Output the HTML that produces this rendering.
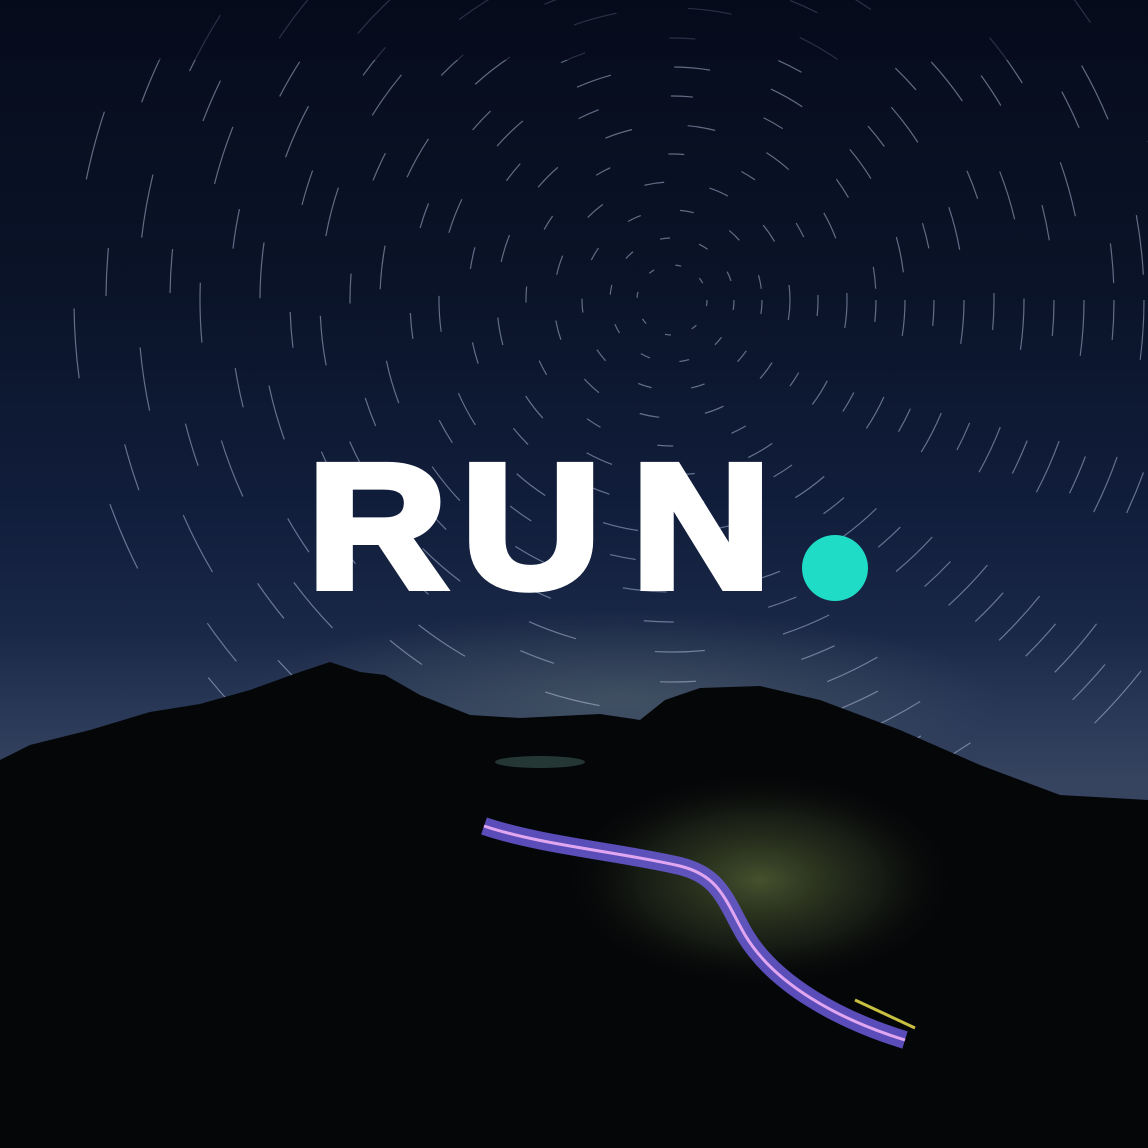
<!DOCTYPE html>
<html><head><meta charset="utf-8"><style>
html,body{margin:0;padding:0;background:#070d1e;width:1148px;height:1148px;overflow:hidden;position:relative}
svg{position:absolute;left:0;top:0}
.l{position:absolute;top:439px;font-family:"Liberation Sans",sans-serif;font-weight:700;font-size:176px;color:#fff;line-height:1;-webkit-text-stroke:8px #fff;paint-order:stroke fill;transform:scaleX(1.09);transform-origin:left top;
text-shadow:2px 0 0 #fff,-2px 0 0 #fff,3px 0 0 #fff,-3px 0 0 #fff}
.dot{position:absolute;left:802px;top:535px;width:66px;height:66px;border-radius:50%;background:#1fdcc6}
</style></head><body>
<svg width="1148" height="1148" viewBox="0 0 1148 1148" xmlns="http://www.w3.org/2000/svg">
<defs>
<linearGradient id="sky" x1="0" y1="0" x2="0" y2="1">
<stop offset="0" stop-color="#060c1c"/>
<stop offset="0.25" stop-color="#0a1328"/>
<stop offset="0.45" stop-color="#111e3c"/>
<stop offset="0.55" stop-color="#1a2847"/>
<stop offset="0.62" stop-color="#293857"/>
<stop offset="0.68" stop-color="#36445f"/>
<stop offset="1" stop-color="#36445f"/>
</linearGradient>
<radialGradient id="glow" cx="0.5" cy="0.5" r="0.5">
<stop offset="0" stop-color="#5a6a70" stop-opacity="0.5"/>
<stop offset="1" stop-color="#5a6a70" stop-opacity="0"/>
</radialGradient>
<radialGradient id="hill" cx="0.5" cy="0.5" r="0.5">
<stop offset="0" stop-color="#5b6a3a" stop-opacity="0.75"/>
<stop offset="0.6" stop-color="#2a3320" stop-opacity="0.5"/>
<stop offset="1" stop-color="#050607" stop-opacity="0"/>
</radialGradient>
</defs>
<rect width="1148" height="1148" fill="url(#sky)"/>
<ellipse cx="620" cy="700" rx="380" ry="90" fill="url(#glow)"/>
<g fill="none" stroke="#bcc6e4" stroke-opacity="0.5" stroke-width="1.2">
<circle cx="672" cy="300" r="35" stroke-dasharray="6 22"/>
<circle cx="672" cy="300" r="62" stroke-dasharray="10 30"/>
<circle cx="672" cy="300" r="90" stroke-dasharray="14 40"/>
<circle cx="672" cy="300" r="118" stroke-dasharray="20 46"/>
<circle cx="672" cy="300" r="146" stroke-dasharray="16 60"/>
<circle cx="672" cy="300" r="175" stroke-dasharray="28 56"/>
<circle cx="672" cy="300" r="204" stroke-dasharray="22 74"/>
<circle cx="672" cy="300" r="233" stroke-dasharray="36 64"/>
<circle cx="672" cy="300" r="262" stroke-dasharray="26 86"/>
<circle cx="672" cy="300" r="292" stroke-dasharray="44 72"/>
<circle cx="672" cy="300" r="322" stroke-dasharray="30 96"/>
<circle cx="672" cy="300" r="352" stroke-dasharray="50 80"/>
<circle cx="672" cy="300" r="382" stroke-dasharray="36 108"/>
<circle cx="672" cy="300" r="412" stroke-dasharray="56 88"/>
<circle cx="672" cy="300" r="442" stroke-dasharray="40 120"/>
<circle cx="672" cy="300" r="472" stroke-dasharray="60 100"/>
<circle cx="672" cy="300" r="502" stroke-dasharray="44 132"/>
<circle cx="672" cy="300" r="534" stroke-dasharray="64 110"/>
<circle cx="672" cy="300" r="566" stroke-dasharray="48 150"/>
<circle cx="672" cy="300" r="598" stroke-dasharray="70 130"/>
</g>
<rect x="0" y="0" width="1148" height="60" fill="#060c1c" opacity="0.6"/>
<path d="M0 760 L30 745 L90 730 L150 712 L200 704 L250 690 L300 672 L330 662 L360 672 L385 675 L420 695 L470 715 L520 718 L600 714 L640 720 L665 700 L700 688 L760 686 L820 700 L900 730 L980 765 L1060 795 L1148 800 L1148 1148 L0 1148 Z" fill="#050608"/>
<ellipse cx="760" cy="880" rx="200" ry="110" fill="url(#hill)"/>
<path d="M484 826 C540 845 620 852 680 866 C720 876 725 900 745 935 C775 985 840 1020 905 1040" fill="none" stroke="#6a5ad8" stroke-width="18" stroke-opacity="0.85"/>
<path d="M484 826 C540 845 620 852 680 866 C720 876 725 900 745 935 C775 985 840 1020 905 1040" fill="none" stroke="#e0a6f0" stroke-width="3"/>
<path d="M855 1000 L915 1028" stroke="#c8c040" stroke-width="3"/>
<ellipse cx="540" cy="762" rx="45" ry="6" fill="#6fa8a0" opacity="0.3"/>
</svg>
<div class="l" style="left:308px">R</div>
<div class="l" style="left:462px">U</div>
<div class="l" style="left:632px">N</div>
<div class="dot"></div>
</body></html>
